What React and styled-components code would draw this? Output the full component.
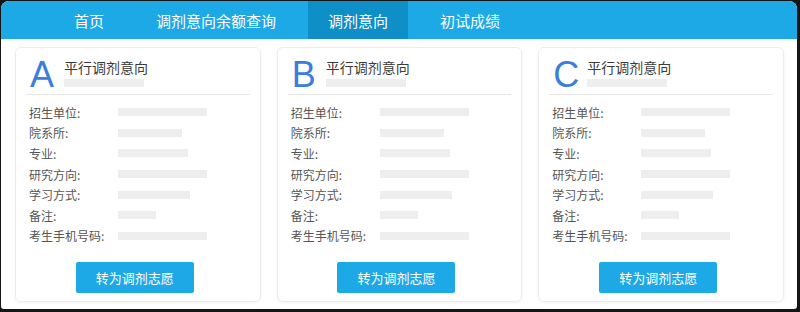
import React from "react";
import styled, { createGlobalStyle } from "styled-components";

const GlobalStyle = createGlobalStyle`
  html, body {
    margin: 0;
    padding: 0;
    background: #151515;
  }
  body {
    font-family: "Noto Sans CJK SC", "Noto Sans", sans-serif;
  }
`;

const tabs = ["首页", "调剂意向余额查询", "调剂意向", "初试成绩"];

const fields = [
  { label: "招生单位:", width: 89 },
  { label: "院系所:", width: 64 },
  { label: "专业:", width: 70 },
  { label: "研究方向:", width: 89 },
  { label: "学习方式:", width: 72 },
  { label: "备注:", width: 38 },
  { label: "考生手机号码:", width: 89 },
];

const App = () => {
  return (
    <>
      <GlobalStyle />
      <Panel>
        <NavBar>
          {tabs.map((t) => (
            <Tab key={t} $active={t === "调剂意向"}>
              {t}
            </Tab>
          ))}
        </NavBar>
        <Cards>
          {["A", "B", "C"].map((letter) => (
            <Card key={letter}>
              <CardHead>
                <Letter>{letter}</Letter>
                <HeadText>
                  <Title>平行调剂意向</Title>
                  <Placeholder $w={80} />
                </HeadText>
              </CardHead>
              <Fields>
                {fields.map((f) => (
                  <FieldRow key={f.label}>
                    <Label>{f.label}</Label>
                    <Placeholder $w={f.width} />
                  </FieldRow>
                ))}
              </Fields>
              <ButtonWrap>
                <ActionButton>转为调剂志愿</ActionButton>
              </ButtonWrap>
            </Card>
          ))}
        </Cards>
      </Panel>
    </>
  );
};

const Panel = styled.div`
  margin: 1px 3px 3px 1px;
  height: 308px;
  background: #fff;
  border-radius: 8px 8px 3px 3px;
  overflow: hidden;
`;

const NavBar = styled.div`
  display: flex;
  align-items: stretch;
  height: 38px;
  padding-left: 53px;
  background: #1ca9e6;
`;

const Tab = styled.div`
  display: flex;
  align-items: center;
  padding: 0 20px;
  margin-right: 12px;
  font-size: 15px;
  color: #fff;
  background: ${(p) => (p.$active ? "#0e8fc8" : "transparent")};
`;

const Cards = styled.div`
  display: grid;
  grid-template-columns: repeat(3, 1fr);
  gap: 16px;
  padding: 8px 13px 6px 14px;
`;

const Card = styled.div`
  height: 253px;
  border: 1px solid #ececec;
  border-radius: 6px;
  box-shadow: 0 1px 3px rgba(0, 0, 0, 0.06);
  padding: 0 10px;
  display: flex;
  flex-direction: column;
`;

const CardHead = styled.div`
  display: flex;
  align-items: flex-start;
  gap: 6px;
  height: 47px;
  padding: 7px 4px 0;
  border-bottom: 1px solid #e6e6e6;
  box-sizing: border-box;
`;

const Letter = styled.div`
  font-family: "Liberation Sans", Arial, sans-serif;
  font-size: 36px;
  line-height: 40px;
  color: #3b7edb;
  width: 28px;
`;

const HeadText = styled.div`
  display: flex;
  flex-direction: column;
  gap: 4px;
  padding-top: 4px;
`;

const Title = styled.div`
  font-size: 14px;
  line-height: 16px;
  font-weight: 400;
  color: #3a3a3a;
`;

const Placeholder = styled.div`
  width: ${(p) => p.$w}px;
  height: 8px;
  background: #eeeeee;
`;

const Fields = styled.div`
  display: flex;
  flex-direction: column;
  padding: 7px 0 0 3px;
`;

const FieldRow = styled.div`
  display: flex;
  align-items: center;
  height: 20.6px;
`;

const Label = styled.div`
  width: 89px;
  font-size: 12px;
  color: #555;
`;

const ButtonWrap = styled.div`
  display: flex;
  justify-content: center;
  margin-top: 16px;
`;

const ActionButton = styled.button`
  width: 118px;
  height: 31px;
  border: none;
  border-radius: 2px;
  background: #1ca9e6;
  color: #fff;
  font-family: "Noto Sans CJK SC", sans-serif;
  font-weight: 400;
  font-size: 13px;
  margin-left: -6px;
  cursor: pointer;
`;

export default App;
